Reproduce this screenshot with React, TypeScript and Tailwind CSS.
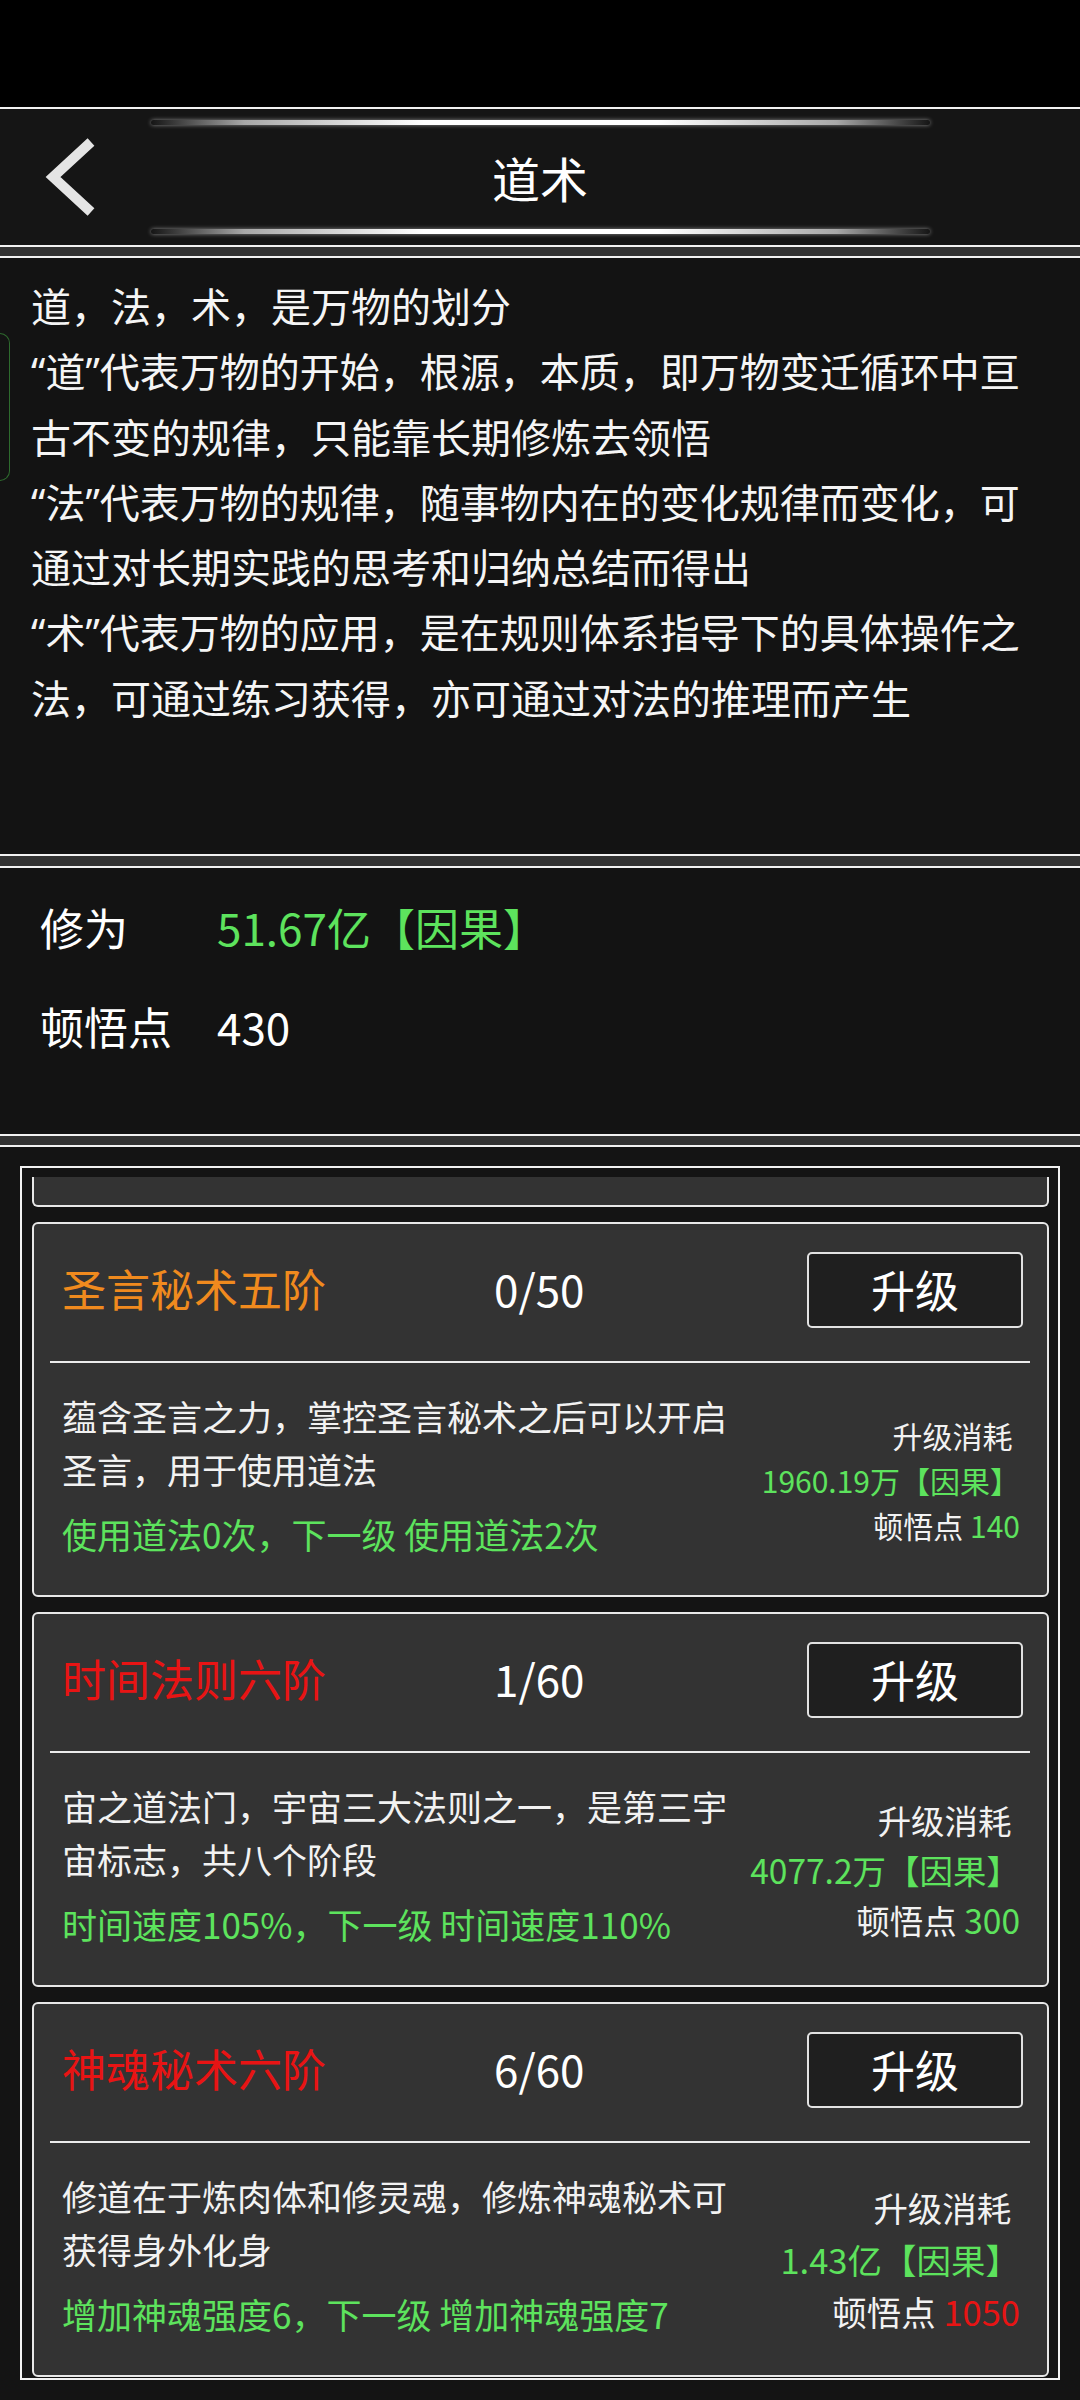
import React from "react";

type Skill = {
  name: string;
  nameColor: string;
  level: string;
  desc: string[];
  effect: string;
  cost: string;
  points: string;
  pointsColor: string;
  costSize: string;
};

const skills: Skill[] = [
  {
    name: "圣言秘术五阶",
    nameColor: "text-[#f08a1e]",
    level: "0/50",
    desc: ["蕴含圣言之力，掌控圣言秘术之后可以开启", "圣言，用于使用道法"],
    effect: "使用道法0次，下一级 使用道法2次",
    cost: "1960.19万【因果】",
    points: "140",
    pointsColor: "text-[#5de35d]",
    costSize: "text-[30px]",
  },
  {
    name: "时间法则六阶",
    nameColor: "text-[#e81414]",
    level: "1/60",
    desc: ["宙之道法门，宇宙三大法则之一，是第三宇", "宙标志，共八个阶段"],
    effect: "时间速度105%，下一级 时间速度110%",
    cost: "4077.2万【因果】",
    points: "300",
    pointsColor: "text-[#5de35d]",
    costSize: "text-[33.5px]",
  },
  {
    name: "神魂秘术六阶",
    nameColor: "text-[#e81414]",
    level: "6/60",
    desc: ["修道在于炼肉体和修灵魂，修炼神魂秘术可", "获得身外化身"],
    effect: "增加神魂强度6，下一级 增加神魂强度7",
    cost: "1.43亿【因果】",
    points: "1050",
    pointsColor: "text-[#e81414]",
    costSize: "text-[34.5px]",
  },
];

const intro = [
  ["道，法，术，是万物的划分"],
  ["“", "道", "”", "代表万物的开始，根源，本质，即万物变迁循环中亘"],
  ["古不变的规律，只能靠长期修炼去领悟"],
  ["“", "法", "”", "代表万物的规律，随事物内在的变化规律而变化，可"],
  ["通过对长期实践的思考和归纳总结而得出"],
  ["“", "术", "”", "代表万物的应用，是在规则体系指导下的具体操作之"],
  ["法，可通过练习获得，亦可通过对法的推理而产生"],
];

const GlowLine = () => (
  <div className="mx-auto h-[5px] w-[779px] rounded-full bg-[linear-gradient(90deg,rgba(255,255,255,0)_0%,rgba(230,230,230,0.7)_12%,#ffffff_35%,#ffffff_65%,rgba(230,230,230,0.7)_88%,rgba(255,255,255,0)_100%)] shadow-[0_0_4px_rgba(255,255,255,0.5)]" />
);

const SkillCard = ({ skill }: { skill: Skill }) => (
  <div className="flex h-[375px] shrink-0 flex-col rounded-[6px] border-2 border-[#e8e8e8] bg-[#333333]">
    <div className="flex h-[137px] items-center pb-[5px] pl-[28px] pr-[24px]">
      <div className={`mb-[4px] w-[432px] text-[44px] leading-none ${skill.nameColor}`}>{skill.name}</div>
      <div className="mb-[4px] flex-1 text-[44px] leading-none text-white">{skill.level}</div>
      <button className="h-[76px] w-[216px] rounded-[5px] border-2 border-[#e2e2e2] bg-[#1f1f1f] pb-[3px] text-[44px] leading-none text-white">
        升级
      </button>
    </div>
    <div className="ml-[16px] mr-[17px] h-[2px] bg-[#ececec]" />
    <div className="flex flex-1 pl-[28px] pr-[27px]">
      <div className="w-[680px] pt-[26px]">
        {skill.desc.map((line) => (
          <div key={line} className="whitespace-nowrap text-[35px] leading-[53px] text-[#f2f2f2]">
            {line}
          </div>
        ))}
        <div className="mt-[12px] whitespace-nowrap text-[35px] leading-[53px] text-[#5de35d]">
          {skill.effect}
        </div>
      </div>
      <div className={`ml-auto mt-[2px] self-center text-right leading-[1.5] ${skill.costSize}`}>
        <div className="pr-[0.25em] text-[#f2f2f2]">升级消耗</div>
        <div className="text-[#5de35d]">{skill.cost}</div>
        <div className="text-[#f2f2f2]">
          顿悟点 <span className={skill.pointsColor}>{skill.points}</span>
        </div>
      </div>
    </div>
  </div>
);

export default function App() {
  return (
    <div className="flex h-[2400px] w-[1080px] flex-col overflow-hidden bg-black font-['Noto_Sans_CJK_SC','Noto_Sans_CJK_JP',sans-serif]">
      <div className="h-[107px] shrink-0 bg-black" />

      {/* title bar */}
      <div className="relative flex h-[140px] shrink-0 flex-col border-y-2 border-[#f2f2f2] bg-[#151515] pb-[11px] pt-[11px]">
        <GlowLine />
        <div className="flex flex-1 items-center justify-center text-[48px] leading-none text-white">道术</div>
        <GlowLine />
        <svg className="absolute left-[43px] top-[29px]" width="56" height="78" viewBox="0 0 56 78">
          <polyline
            points="48,4 10,39 48,74"
            fill="none"
            stroke="#e4e4e4"
            strokeWidth="10"
            strokeLinejoin="miter"
          />
        </svg>
      </div>
      <div className="h-[9px] shrink-0 bg-[#333333]" />

      {/* intro */}
      <div className="relative h-[600px] shrink-0 border-y-2 border-[#f2f2f2] bg-[#131313] pl-[31px] pt-[15px] text-[40px] leading-[65.3px] text-[#f5f5f5]">
        {intro.map((parts, i) => (
          <div key={i} className="h-[65.3px] whitespace-nowrap">
            {parts.map((p, j) =>
              p === "“" || p === "”" ? (
                <span key={j} className="font-['Noto_Sans',sans-serif]">
                  {p}
                </span>
              ) : (
                <span key={j}>{p}</span>
              )
            )}
          </div>
        ))}
        <div className="absolute left-0 top-[75px] h-[148px] w-[10px] rounded-r-[10px] border border-l-0 border-[#2e6b2e]" />
      </div>
      <div className="h-[10px] shrink-0 bg-[#333333]" />

      {/* stats */}
      <div className="h-[270px] shrink-0 border-y-2 border-[#f2f2f2] bg-[#131313] pl-[40px] pt-[29px]">
        <div className="grid grid-cols-[177px_auto] gap-y-[39px] text-[44px] leading-[60px]">
          <div className="text-white">修为</div>
          <div className="text-[#5de35d]">51.67亿【因果】</div>
          <div className="text-white">顿悟点</div>
          <div className="text-white">430</div>
        </div>
      </div>
      <div className="h-[9px] shrink-0 bg-[#333333]" />

      {/* skill list */}
      <div className="flex-1 border-t-2 border-[#f2f2f2] bg-[#141414] px-[20px] pt-[19px]">
        <div className="flex h-[1214px] flex-col border-2 border-[#f2f2f2] pl-[10px] pr-[9px] pt-[9px]">
          <div className="flex flex-1 flex-col gap-[15px] overflow-hidden">
            <div className="h-[30px] shrink-0 rounded-b-[6px] border-2 border-t-0 border-[#e8e8e8] bg-[#333333]" />
            {skills.map((s) => (
              <SkillCard key={s.name} skill={s} />
            ))}
          </div>
        </div>
      </div>
    </div>
  );
}
